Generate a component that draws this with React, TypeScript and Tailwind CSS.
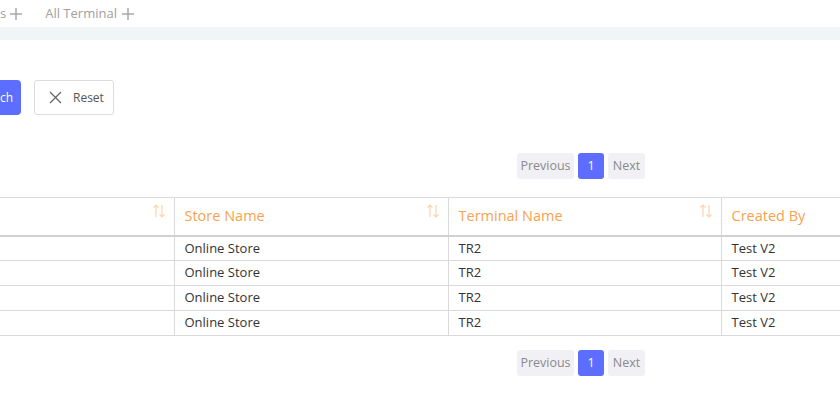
import React from "react";

const SortIcon = () => (
  <svg width="14" height="16" viewBox="0 0 14 16" fill="none" stroke="#fcd5ad" strokeWidth="1.2">
    <path d="M4 2v12M1.5 4.5L4 2l2.5 2.5" />
    <path d="M10 2v12M7.5 11.5L10 14l2.5-2.5" />
  </svg>
);

const Plus = () => (
  <svg width="12" height="12" viewBox="0 0 12 12" stroke="#a8a8a8" strokeWidth="1.5">
    <path d="M6 0v12M0 6h12" />
  </svg>
);

const Pager = () => (
  <div className="flex justify-start pl-[517px] gap-[4px] text-[12.5px]">
    <div className="h-[26px] w-[57px] flex items-center justify-center bg-[#f1f1f5] text-[#8a8a8a] rounded-[3px]">Previous</div>
    <div className="h-[26px] w-[26px] flex items-center justify-center bg-[#5c6dff] text-white rounded-[3px]">1</div>
    <div className="h-[26px] w-[37px] flex items-center justify-center bg-[#f1f1f5] text-[#8a8a8a] rounded-[3px]">Next</div>
  </div>
);

const rows = [1, 2, 3, 4];

export default function App() {
  return (
    <div
      className="w-[840px] h-[400px] overflow-hidden bg-white"
      style={{ fontFamily: '"Open Sans", "Liberation Sans", sans-serif' }}
    >
      <div className="h-[27px] flex items-center text-[13px] text-[#a0a0a0]">
        <span className="flex items-center gap-[4px]">
          s<Plus />
        </span>
        <span className="flex items-center gap-[5px] ml-[23px]">
          All Terminal<Plus />
        </span>
      </div>
      <div className="h-[13px] bg-[#f0f6f5]" />
      <div className="flex items-center gap-[13px] mt-[40px] h-[35px]">
        <div className="h-[35px] w-[21px] bg-[#5c6dff] rounded-r-[4px] flex items-center text-white text-[12px] overflow-hidden">
          <span>ch</span>
        </div>
        <div className="h-[35px] w-[80px] border border-[#dcdcdc] rounded-[3px] flex items-center pl-[14px] gap-[11px] text-[12px] text-[#555]">
          <svg width="13" height="13" viewBox="0 0 13 13" stroke="#666" strokeWidth="1.3">
            <path d="M1 1l11 11M12 1L1 12" />
          </svg>
          <span>Reset</span>
        </div>
      </div>
      <div className="mt-[38px]">
        <Pager />
      </div>
      <div className="mt-[18px] w-[1000px]">
        <table className="table-fixed border-collapse w-[1000px] text-[13px] text-[#333]">
          <colgroup>
            <col className="w-[174px]" />
            <col className="w-[274px]" />
            <col className="w-[273px]" />
            <col />
          </colgroup>
          <thead>
            <tr className="h-[38px] border-t border-[#d9d9d9] border-b-2 border-b-[#d0d0d0]">
              {["", "Store Name", "Terminal Name", "Created By"].map((h, i) => (
                <th
                  key={i}
                  className={`relative text-left font-normal text-[14.5px] text-[#f9a24f] pl-[10px] pt-[0px] ${i < 3 ? "border-r border-[#d9d9d9]" : ""}`}
                >
                  {h}
                  {i < 3 && (
                    <span className="absolute right-[8px] top-[5px]">
                      <SortIcon />
                    </span>
                  )}
                </th>
              ))}
            </tr>
          </thead>
          <tbody>
            {rows.map((r) => (
              <tr key={r} className="h-[25px] border-b border-[#d9d9d9]">
                <td className="border-r border-[#d9d9d9]"></td>
                <td className="border-r border-[#d9d9d9] pl-[10px]">Online Store</td>
                <td className="border-r border-[#d9d9d9] pl-[10px]">TR2</td>
                <td className="pl-[10px]">Test V2</td>
              </tr>
            ))}
          </tbody>
        </table>
      </div>
      <div className="mt-[14px]">
        <Pager />
      </div>
    </div>
  );
}
